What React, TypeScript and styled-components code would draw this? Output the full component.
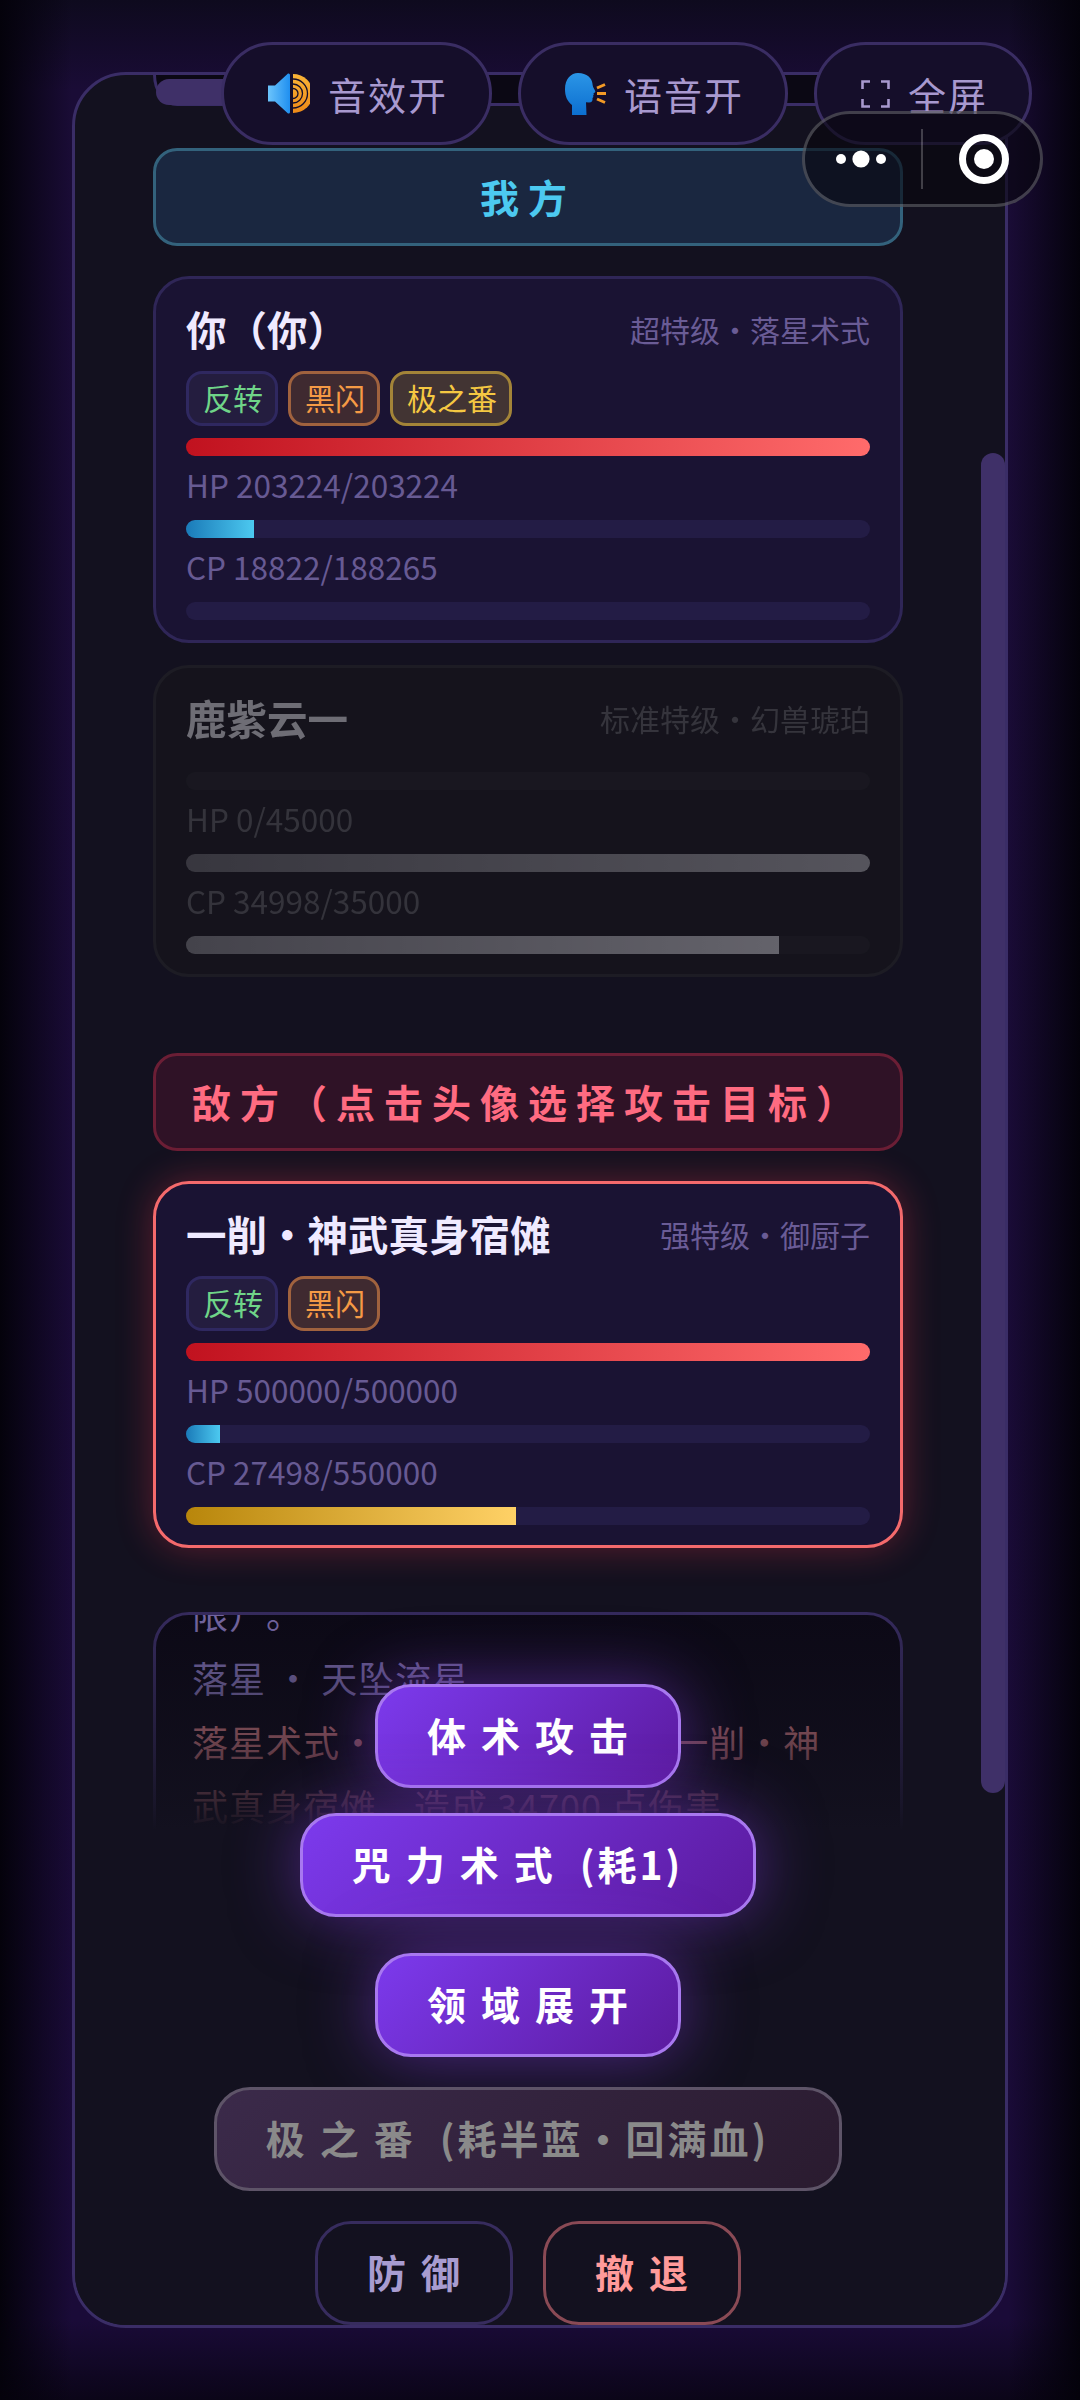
import React from 'react';
import styled, { createGlobalStyle } from 'styled-components';

const GlobalStyle = createGlobalStyle`
    html, body {
        margin: 0;
        padding: 0;
        background: #07040f;
    }
    * {
        box-sizing: border-box;
    }
`;

const Page = styled.div`
    position: relative;
    width: 1080px;
    height: 2400px;
    padding: 72px 72px 0;
    overflow: hidden;
    font-family: "Noto Sans CJK SC", "Noto Sans", sans-serif;
    text-spacing-trim: space-all;
    background:
        linear-gradient(to right, #04020b 0, rgba(4, 2, 11, 0) 72px, rgba(4, 2, 11, 0) 1008px, #04020b 1080px),
        linear-gradient(to bottom, #0e0a1e 0, #1a0c36 90px, #1a0b38 2320px, #0b0518 2400px);
`;

const Panel = styled.div`
    position: relative;
    width: 936px;
    height: 2256px;
    border: 3px solid #3a2d66;
    border-radius: 54px;
    background: #13111f;
    overflow: hidden;
`;

const Scroller = styled.div`
    display: flex;
    flex-direction: column;
    width: 750px;
    margin-left: 78px;
`;

const ClippedBar = styled.div`
    height: 31px;
    padding-top: 4px;
    border-left: 3px solid #3a2d66;
    border-bottom: 3px solid #3a2d66;
    border-bottom-left-radius: 24px 31px;
    background: #0b0814;
`;

const ClippedPill = styled.div`
    width: 120px;
    height: 26px;
    border-radius: 14px 0 0 14px;
    background: #3f3068;
`;

const Band = styled.div<{ $enemy?: boolean }>`
    display: flex;
    align-items: center;
    justify-content: center;
    height: 98px;
    margin-top: ${(p) => (p.$enemy ? '76px' : '42px')};
    padding-bottom: 3px;
    border: 3px solid ${(p) => (p.$enemy ? '#6b1e35' : '#33627c')};
    border-radius: 24px;
    background: ${(p) => (p.$enemy ? '#2f1226' : '#1a2740')};
    color: ${(p) => (p.$enemy ? '#ff6b81' : '#4cc9f0')};
    font-size: 39px;
    font-weight: 700;
    letter-spacing: 9px;
`;

const Card = styled.div<{ $target?: boolean; $dead?: boolean; $gap: number }>`
    margin-top: ${(p) => p.$gap}px;
    padding: 20px 30px 20px;
    border: 3px solid ${(p) => (p.$target ? '#f46a6c' : '#2f2657')};
    border-radius: 36px;
    background: #1a1333;
    box-shadow: ${(p) => (p.$target ? '0 0 36px rgba(255, 60, 80, 0.32)' : 'none')};
    filter: ${(p) => (p.$dead ? 'grayscale(1) opacity(0.42)' : 'none')};
`;

const TitleRow = styled.div`
    display: flex;
    align-items: center;
    justify-content: space-between;
    height: 64px;
    margin-bottom: 8px;
    padding-bottom: 5px;
`;

const Name = styled.span`
    color: #efeaff;
    font-size: 40.5px;
    font-weight: 700;
`;

const Grade = styled.span`
    color: #6a5c96;
    font-size: 30px;
`;

const Tags = styled.div`
    display: flex;
    gap: 10px;
    margin-bottom: 12px;
`;

const tagColors = {
    green: { text: '#6fd488', bg: '#241d3f', line: '#2f2860' },
    orange: { text: '#f59a45', bg: '#3f2a30', line: '#a0623e' },
    gold: { text: '#f5c842', bg: '#423433', line: '#a38438' },
};

const Tag = styled.span<{ $kind: keyof typeof tagColors }>`
    display: flex;
    align-items: center;
    height: 55px;
    padding: 0 12px 3px 14px;
    border: 3px solid ${(p) => tagColors[p.$kind].line};
    border-radius: 16px;
    background: ${(p) => tagColors[p.$kind].bg};
    color: ${(p) => tagColors[p.$kind].text};
    font-size: 30px;
`;

const Track = styled.div`
    height: 18px;
    border-radius: 9px;
    background: #231c45;
    overflow: hidden;
`;

const barFills = {
    hp: 'linear-gradient(to right, #c1121f, #ff6b6b)',
    cp: 'linear-gradient(to right, #1a7ab8, #4cc9f0)',
    sp: 'linear-gradient(to right, #b8860b, #ffd166)',
};

const Fill = styled.div<{ $kind: keyof typeof barFills }>`
    height: 100%;
    background: ${(p) => barFills[p.$kind]};
`;

const Stat = styled.div`
    padding-bottom: 8px;
    color: #675a93;
    font-size: 31.5px;
    line-height: 56px;
`;

const LogBox = styled.div`
    height: 300px;
    margin-top: 64px;
    padding-left: 36px;
    border: 3px solid #352a5c;
    border-radius: 36px;
    background: #0c0916;
    overflow: hidden;
`;

const LogLine = styled.div<{ $hit?: boolean }>`
    color: ${(p) => (p.$hit ? '#d07a80' : '#7365a0')};
    font-size: 36px;
    letter-spacing: 1px;
    line-height: 64px;
    white-space: pre;

    &:first-child {
        margin-top: -34px;
    }
`;

const ScrollThumb = styled.div`
    position: absolute;
    top: 378px;
    right: 0;
    width: 24px;
    height: 1340px;
    border-radius: 12px;
    background: #3f3068;
    z-index: 3;
`;

const Dock = styled.div`
    position: absolute;
    left: 0;
    right: 0;
    bottom: 0;
    display: flex;
    flex-direction: column;
    align-items: center;
    padding-top: 71px;
    padding-right: 24px;
    background: linear-gradient(
        to bottom,
        rgba(19, 17, 31, 0) 0,
        rgba(19, 17, 31, 0.55) 132px,
        rgba(19, 17, 31, 0.82) 190px,
        #13111f 217px
    );
    z-index: 2;
`;

const MainButton = styled.button<{ $top: number }>`
    position: relative;
    display: flex;
    align-items: center;
    justify-content: center;
    height: 104px;
    margin-top: ${(p) => p.$top}px;
    padding: 0 35px 4px 49px;
    border: 3px solid #a878f0;
    border-radius: 36px;
    background: linear-gradient(135deg, #7c3aed, #5b1a9e);
    box-shadow: 0 0 66px rgba(130, 60, 225, 0.52);
    color: #ffffff;
    font-family: inherit;
    font-size: 39px;
    font-weight: 700;
    letter-spacing: 15px;
    white-space: pre;
`;

const Cost = styled.span`
    margin-right: 35px;
    letter-spacing: 3px;
`;

const UltButton = styled(MainButton)`
    border-color: #5e5468;
    background: linear-gradient(135deg, #3b2a4a, #2a1b2f);
    box-shadow: none;
    color: #8a8a8a;
`;

const ButtonRow = styled.div`
    display: flex;
    gap: 30px;
    margin-top: 30px;
`;

const GhostButton = styled.button<{ $danger?: boolean }>`
    display: flex;
    align-items: center;
    justify-content: center;
    height: 104px;
    padding: 0 35px 4px 49px;
    border: 3px solid ${(p) => (p.$danger ? '#8a4a55' : '#372c5e')};
    border-radius: 36px;
    background: #13111f;
    color: ${(p) => (p.$danger ? '#ff9a9a' : '#a89cd0')};
    font-family: inherit;
    font-size: 39px;
    font-weight: 700;
    letter-spacing: 15px;
`;

const TopBar = styled.div`
    position: absolute;
    top: 42px;
    left: 221px;
    display: flex;
    gap: 26px;
`;

const ToggleButton = styled.button`
    display: flex;
    align-items: center;
    gap: 18px;
    height: 103px;
    padding: 0 41px 0 44px;
    border: 3px solid #3a2d63;
    border-radius: 52px;
    background: #150e2a;
    color: #a899cf;
    font-family: inherit;
    font-size: 38px;
    letter-spacing: 2px;
    white-space: nowrap;
`;

const Capsule = styled.div`
    position: absolute;
    top: 111px;
    left: 802px;
    display: flex;
    align-items: center;
    width: 241px;
    height: 96px;
    border: 3px solid rgba(255, 255, 255, 0.22);
    border-radius: 48px;
    background: rgba(8, 6, 14, 0.62);
`;

const CapsuleSide = styled.div<{ $right?: boolean }>`
    display: flex;
    align-items: center;
    justify-content: center;
    flex: 1;
    height: 100%;
    padding: ${(p) => (p.$right ? '0 0 0 6px' : '0 4px 0 0')};
`;

const CapsuleRule = styled.div`
    width: 2px;
    height: 60px;
    background: rgba(255, 255, 255, 0.22);
`;

const SpeakerIcon = () => (
    <svg width="42" height="41" viewBox="0 0 42 41">
        <defs>
            <linearGradient id="cone" x1="0" y1="0" x2="1" y2="0">
                <stop offset="0" stopColor="#6cc4fb" />
                <stop offset="1" stopColor="#1f8ff0" />
            </linearGradient>
            <linearGradient id="rings" x1="0" y1="0" x2="0" y2="1">
                <stop offset="0" stopColor="#f9b437" />
                <stop offset="1" stopColor="#ee8a18" />
            </linearGradient>
        </defs>
        <path d="M0 12.5 L7 12.5 L20 0.5 Q22 0 22 2 L22 39 Q22 41 20 40.5 L7 28.5 L0 28.5 Z" fill="url(#cone)" />
        <path d="M25 1 A20 19.5 0 0 1 25 40 Z" fill="url(#rings)" />
        <path d="M25 6 A14.5 14.5 0 0 1 25 35" fill="none" stroke="#150e2a" strokeWidth="1.3" />
        <path d="M25 11 A9.5 9.5 0 0 1 25 30" fill="none" stroke="#150e2a" strokeWidth="1.3" />
        <path d="M25 15.5 A5 5 0 0 1 25 25.5" fill="none" stroke="#150e2a" strokeWidth="1.3" />
    </svg>
);

const SpeakingHeadIcon = () => (
    <svg width="41" height="42" viewBox="0 0 41 42">
        <defs>
            <linearGradient id="head" x1="0" y1="0" x2="0" y2="1">
                <stop offset="0" stopColor="#2b95e6" />
                <stop offset="1" stopColor="#0c6fd0" />
            </linearGradient>
        </defs>
        <path
            d="M13 0 C22 0 27 5 27.5 11 C27.7 13 28 14 30 17.5 C30.8 19 30 19.8 28.5 20 C29 21.5 28.8 22.2 28 22.6 C28.6 23.6 28.4 24.6 27.5 25 C28 28 26.5 29.5 24 29.5 L21 29.3 L21.5 42 L7 42 L7 32 C2 28 0 23 0 16 C0 6 6 0 13 0 Z"
            fill="url(#head)"
        />
        <path d="M32 15 L40 11.5 M32 20.5 L41 20.5 M32 26 L40 29.5" stroke="#f39a26" strokeWidth="3" fill="none" />
    </svg>
);

const FullscreenIcon = () => (
    <svg width="29" height="28" viewBox="0 0 29 28" fill="none" stroke="#a899cf" strokeWidth="2.6">
        <path d="M9 1.5 H1.5 V9 M20 1.5 H27.5 V9 M1.5 19 V26.5 H9 M27.5 19 V26.5 H20" />
    </svg>
);

const MoreDots = () => (
    <svg width="50" height="18" viewBox="0 0 50 18" fill="#ffffff">
        <circle cx="5" cy="9" r="5" />
        <circle cx="25" cy="9" r="8.6" />
        <circle cx="45" cy="9" r="5" />
    </svg>
);

const TargetIcon = () => (
    <svg width="50" height="50" viewBox="0 0 50 50">
        <circle cx="25" cy="25" r="21.5" fill="none" stroke="#ffffff" strokeWidth="7" />
        <circle cx="25" cy="25" r="10" fill="#ffffff" />
    </svg>
);

interface FighterProps {
    name: string;
    grade: string;
    tags: { label: string; kind: keyof typeof tagColors }[];
    hp: string;
    cp: string;
    bars: number[];
    gap: number;
    target?: boolean;
    dead?: boolean;
}

const Fighter: React.FC<FighterProps> = ({ name, grade, tags, hp, cp, bars, gap, target, dead }) => (
    <Card $gap={gap} $target={target} $dead={dead}>
        <TitleRow>
            <Name>{name}</Name>
            <Grade>{grade}</Grade>
        </TitleRow>
        <Tags>
            {tags.map((t) => (
                <Tag key={t.label} $kind={t.kind}>{t.label}</Tag>
            ))}
        </Tags>
        <Track><Fill $kind="hp" style={{ width: `${bars[0]}%` }} /></Track>
        <Stat>{hp}</Stat>
        <Track><Fill $kind="cp" style={{ width: `${bars[1]}%` }} /></Track>
        <Stat>{cp}</Stat>
        <Track><Fill $kind="sp" style={{ width: `${bars[2]}%` }} /></Track>
    </Card>
);

const App: React.FC = () => (
    <Page>
        <GlobalStyle />
        <Panel>
            <Scroller>
                <ClippedBar><ClippedPill /></ClippedBar>
                <Band>我方</Band>
                <Fighter
                    gap={30}
                    name="你（你）"
                    grade="超特级·落星术式"
                    tags={[
                        { label: '反转', kind: 'green' },
                        { label: '黑闪', kind: 'orange' },
                        { label: '极之番', kind: 'gold' },
                    ]}
                    hp="HP 203224/203224"
                    cp="CP 18822/188265"
                    bars={[100, 10, 0]}
                />
                <Fighter
                    gap={22}
                    dead
                    name="鹿紫云一"
                    grade="标准特级·幻兽琥珀"
                    tags={[]}
                    hp="HP 0/45000"
                    cp="CP 34998/35000"
                    bars={[0, 100, 86.7]}
                />
                <Band $enemy>敌方（点击头像选择攻击目标）</Band>
                <Fighter
                    gap={30}
                    target
                    name="一削·神武真身宿傩"
                    grade="强特级·御厨子"
                    tags={[
                        { label: '反转', kind: 'green' },
                        { label: '黑闪', kind: 'orange' },
                    ]}
                    hp="HP 500000/500000"
                    cp="CP 27498/550000"
                    bars={[100, 5, 48.3]}
                />
                <LogBox>
                    <LogLine>限）。</LogLine>
                    <LogLine>落星 · 天坠流星</LogLine>
                    <LogLine $hit>落星术式·天坠流星  命中 对 一削·神</LogLine>
                    <LogLine $hit>武真身宿傩，造成 34700 点伤害</LogLine>
                </LogBox>
            </Scroller>
            <ScrollThumb />
            <Dock>
                <MainButton $top={0}>体术攻击</MainButton>
                <MainButton $top={25}>咒力术式<Cost> (耗1)</Cost></MainButton>
                <MainButton $top={36}>领域展开</MainButton>
                <UltButton $top={30}>极之番<Cost> (耗半蓝·回满血)</Cost></UltButton>
                <ButtonRow>
                    <GhostButton>防御</GhostButton>
                    <GhostButton $danger>撤退</GhostButton>
                </ButtonRow>
            </Dock>
        </Panel>
        <TopBar>
            <ToggleButton><SpeakerIcon />音效开</ToggleButton>
            <ToggleButton><SpeakingHeadIcon />语音开</ToggleButton>
            <ToggleButton><FullscreenIcon />全屏</ToggleButton>
        </TopBar>
        <Capsule>
            <CapsuleSide><MoreDots /></CapsuleSide>
            <CapsuleRule />
            <CapsuleSide $right><TargetIcon /></CapsuleSide>
        </Capsule>
    </Page>
);

export default App;
